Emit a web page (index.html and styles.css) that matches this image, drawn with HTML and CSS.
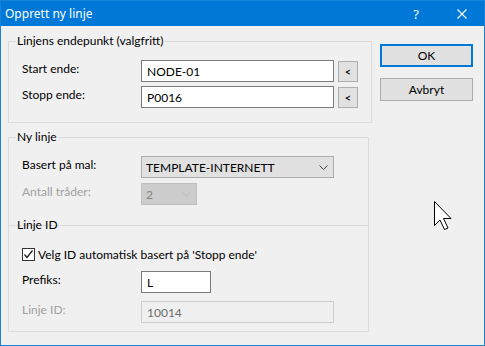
FILE: index.html
```html
<!DOCTYPE html>
<html lang="nb">
<head>
    <meta charset="UTF-8">
    <title>Opprett ny linje</title>
    <link rel="stylesheet" href="styles.css">
</head>
<body>
    <div class="window">
        <div class="titlebar">
            <span class="title">Opprett ny linje</span>
            <span class="help">?</span>
            <svg class="close" width="10" height="10" viewBox="0 0 10 10">
                <path d="M0.5 0.5 L9.5 9.5 M9.5 0.5 L0.5 9.5" stroke="#fff" stroke-width="1.1"/>
            </svg>
        </div>

        <div class="content">
            <div class="groups">
                <fieldset class="group group-end">
                    <legend>Linjens endepunkt (valgfritt)</legend>
                    <div class="row">
                        <label for="start">Start ende:</label>
                        <input class="field wide" type="text" id="start" value="NODE-01">
                        <button class="pick">&lt;</button>
                    </div>
                    <div class="row">
                        <label for="stopp">Stopp ende:</label>
                        <input class="field wide" type="text" id="stopp" value="P0016">
                        <button class="pick">&lt;</button>
                    </div>
                </fieldset>

                <fieldset class="group group-new">
                    <legend>Ny linje</legend>
                    <div class="row">
                        <label>Basert på mal:</label>
                        <div class="combo wide">
                            <span>TEMPLATE-INTERNETT</span>
                            <svg width="9" height="5" viewBox="0 0 9 5"><path d="M0.5 0.5 L4.5 4.5 L8.5 0.5" fill="none" stroke="#444" stroke-width="1"/></svg>
                        </div>
                    </div>
                    <div class="row">
                        <label class="disabled">Antall tråder:</label>
                        <div class="combo small is-disabled">
                            <span>2</span>
                            <svg width="9" height="5" viewBox="0 0 9 5"><path d="M0.5 0.5 L4.5 4.5 L8.5 0.5" fill="none" stroke="#bcbcbc" stroke-width="1"/></svg>
                        </div>
                    </div>
                </fieldset>

                <fieldset class="group group-id">
                    <legend>Linje ID</legend>
                    <div class="check-row">
                        <span class="checkbox">
                            <svg width="11" height="11" viewBox="0 0 11 11"><path d="M1.5 5.5 L4 8.5 L9.5 1.5" fill="none" stroke="#222" stroke-width="1.3"/></svg>
                        </span>
                        <span>Velg ID automatisk basert på 'Stopp ende'</span>
                    </div>
                    <div class="row">
                        <label for="prefiks">Prefiks:</label>
                        <input class="field short" type="text" id="prefiks" value="L">
                    </div>
                    <div class="row">
                        <label class="disabled" for="linjeid">Linje ID:</label>
                        <input class="field wide" type="text" id="linjeid" value="10014" disabled>
                    </div>
                </fieldset>
            </div>

            <div class="actions">
                <button class="btn default">OK</button>
                <button class="btn">Avbryt</button>
            </div>
        </div>

        <svg class="cursor" width="19" height="30" viewBox="0 0 19 30">
            <path d="M0.5 0.5 L0.5 24.5 L6 19 L10.5 28.5 L14 27 L9.5 17.5 L17 17.5 Z" fill="#fff" stroke="#000" stroke-width="1"/>
        </svg>
    </div>
</body>
</html>
```

FILE: styles.css
```css
body {
    margin: 0;
    background: #fff;
    font-family: Lato, "Noto Sans", sans-serif;
    font-size: 12px;
    color: #000;
}

.window {
    position: relative;
    width: 485px;
    height: 346px;
    box-sizing: border-box;
    border: 1px solid #1883d7;
    background: #f0f0f0;
}

.titlebar {
    display: flex;
    align-items: center;
    height: 25px;
    background: #0078d7;
    color: #fff;
    padding-left: 4px;
    font-family: "Noto Sans", sans-serif;
    font-size: 12px;
}

.title {
    flex: 1;
}

.help {
    margin-right: 38px;
    font-size: 13px;
}

.close {
    margin-right: 17px;
}

.content {
    display: flex;
    padding: 7px 0 0 7px;
}

.groups {
    width: 361px;
}

.group {
    margin: 0;
    padding: 11px 13px 14px 13px;
    border: 1px solid #dcdcdc;
}

.group legend {
    margin-left: -6px;
    padding: 0 1px;
    line-height: 16px;
}

.group-new {
    margin-top: 6px;
    padding-bottom: 20px;
}

.group-id {
    margin-top: -9px;
    padding-bottom: 8px;
}

.row {
    display: flex;
    align-items: center;
    height: 22px;
}

.row + .row {
    margin-top: 4px;
}

.group-new .row + .row {
    margin-top: 5px;
}

.row label {
    width: 119px;
    margin-top: -5px;
}

.disabled {
    color: #a0a0a0;
}

.field {
    height: 22px;
    box-sizing: border-box;
    border: 1px solid #7a7a7a;
    background: #fff;
    padding: 0 5px;
    font: inherit;
    color: #000;
    outline: none;
}

.field:disabled {
    border-color: #cccccc;
    background: #f0f0f0;
    color: #6d6d6d;
}

.wide {
    width: 193px;
}

.short {
    width: 70px;
}

.pick {
    width: 20px;
    height: 21px;
    margin-left: 4px;
    padding: 0;
    border: 1px solid #adadad;
    background: #e1e1e1;
    font: inherit;
    font-size: 11px;
    font-weight: bold;
    color: #222;
}

.combo {
    display: flex;
    align-items: center;
    justify-content: space-between;
    height: 22px;
    box-sizing: border-box;
    padding: 0 5px 0 4px;
    border: 1px solid #adadad;
    background: #e1e1e1;
}

.combo.small {
    width: 56px;
}

.combo.is-disabled {
    border-color: #bfbfbf;
    background: #cccccc;
    color: #838383;
}

.check-row {
    display: flex;
    align-items: center;
    gap: 3px;
    height: 16px;
    margin-top: 2px;
    margin-bottom: 9px;
}

.checkbox {
    display: flex;
    align-items: center;
    justify-content: center;
    width: 13px;
    height: 13px;
    box-sizing: border-box;
    border: 1px solid #333;
    background: #fff;
}

.group-id .row + .row {
    margin-top: 8px;
}

.actions {
    display: flex;
    flex-direction: column;
    gap: 11px;
    margin: 11px 0 0 11px;
}

.btn {
    width: 93px;
    height: 23px;
    padding: 0;
    border: 1px solid #adadad;
    background: #e1e1e1;
    font: inherit;
    color: #000;
}

.btn.default {
    border: 2px solid #0078d7;
}

.cursor {
    position: absolute;
    left: 433px;
    top: 200px;
}
```
